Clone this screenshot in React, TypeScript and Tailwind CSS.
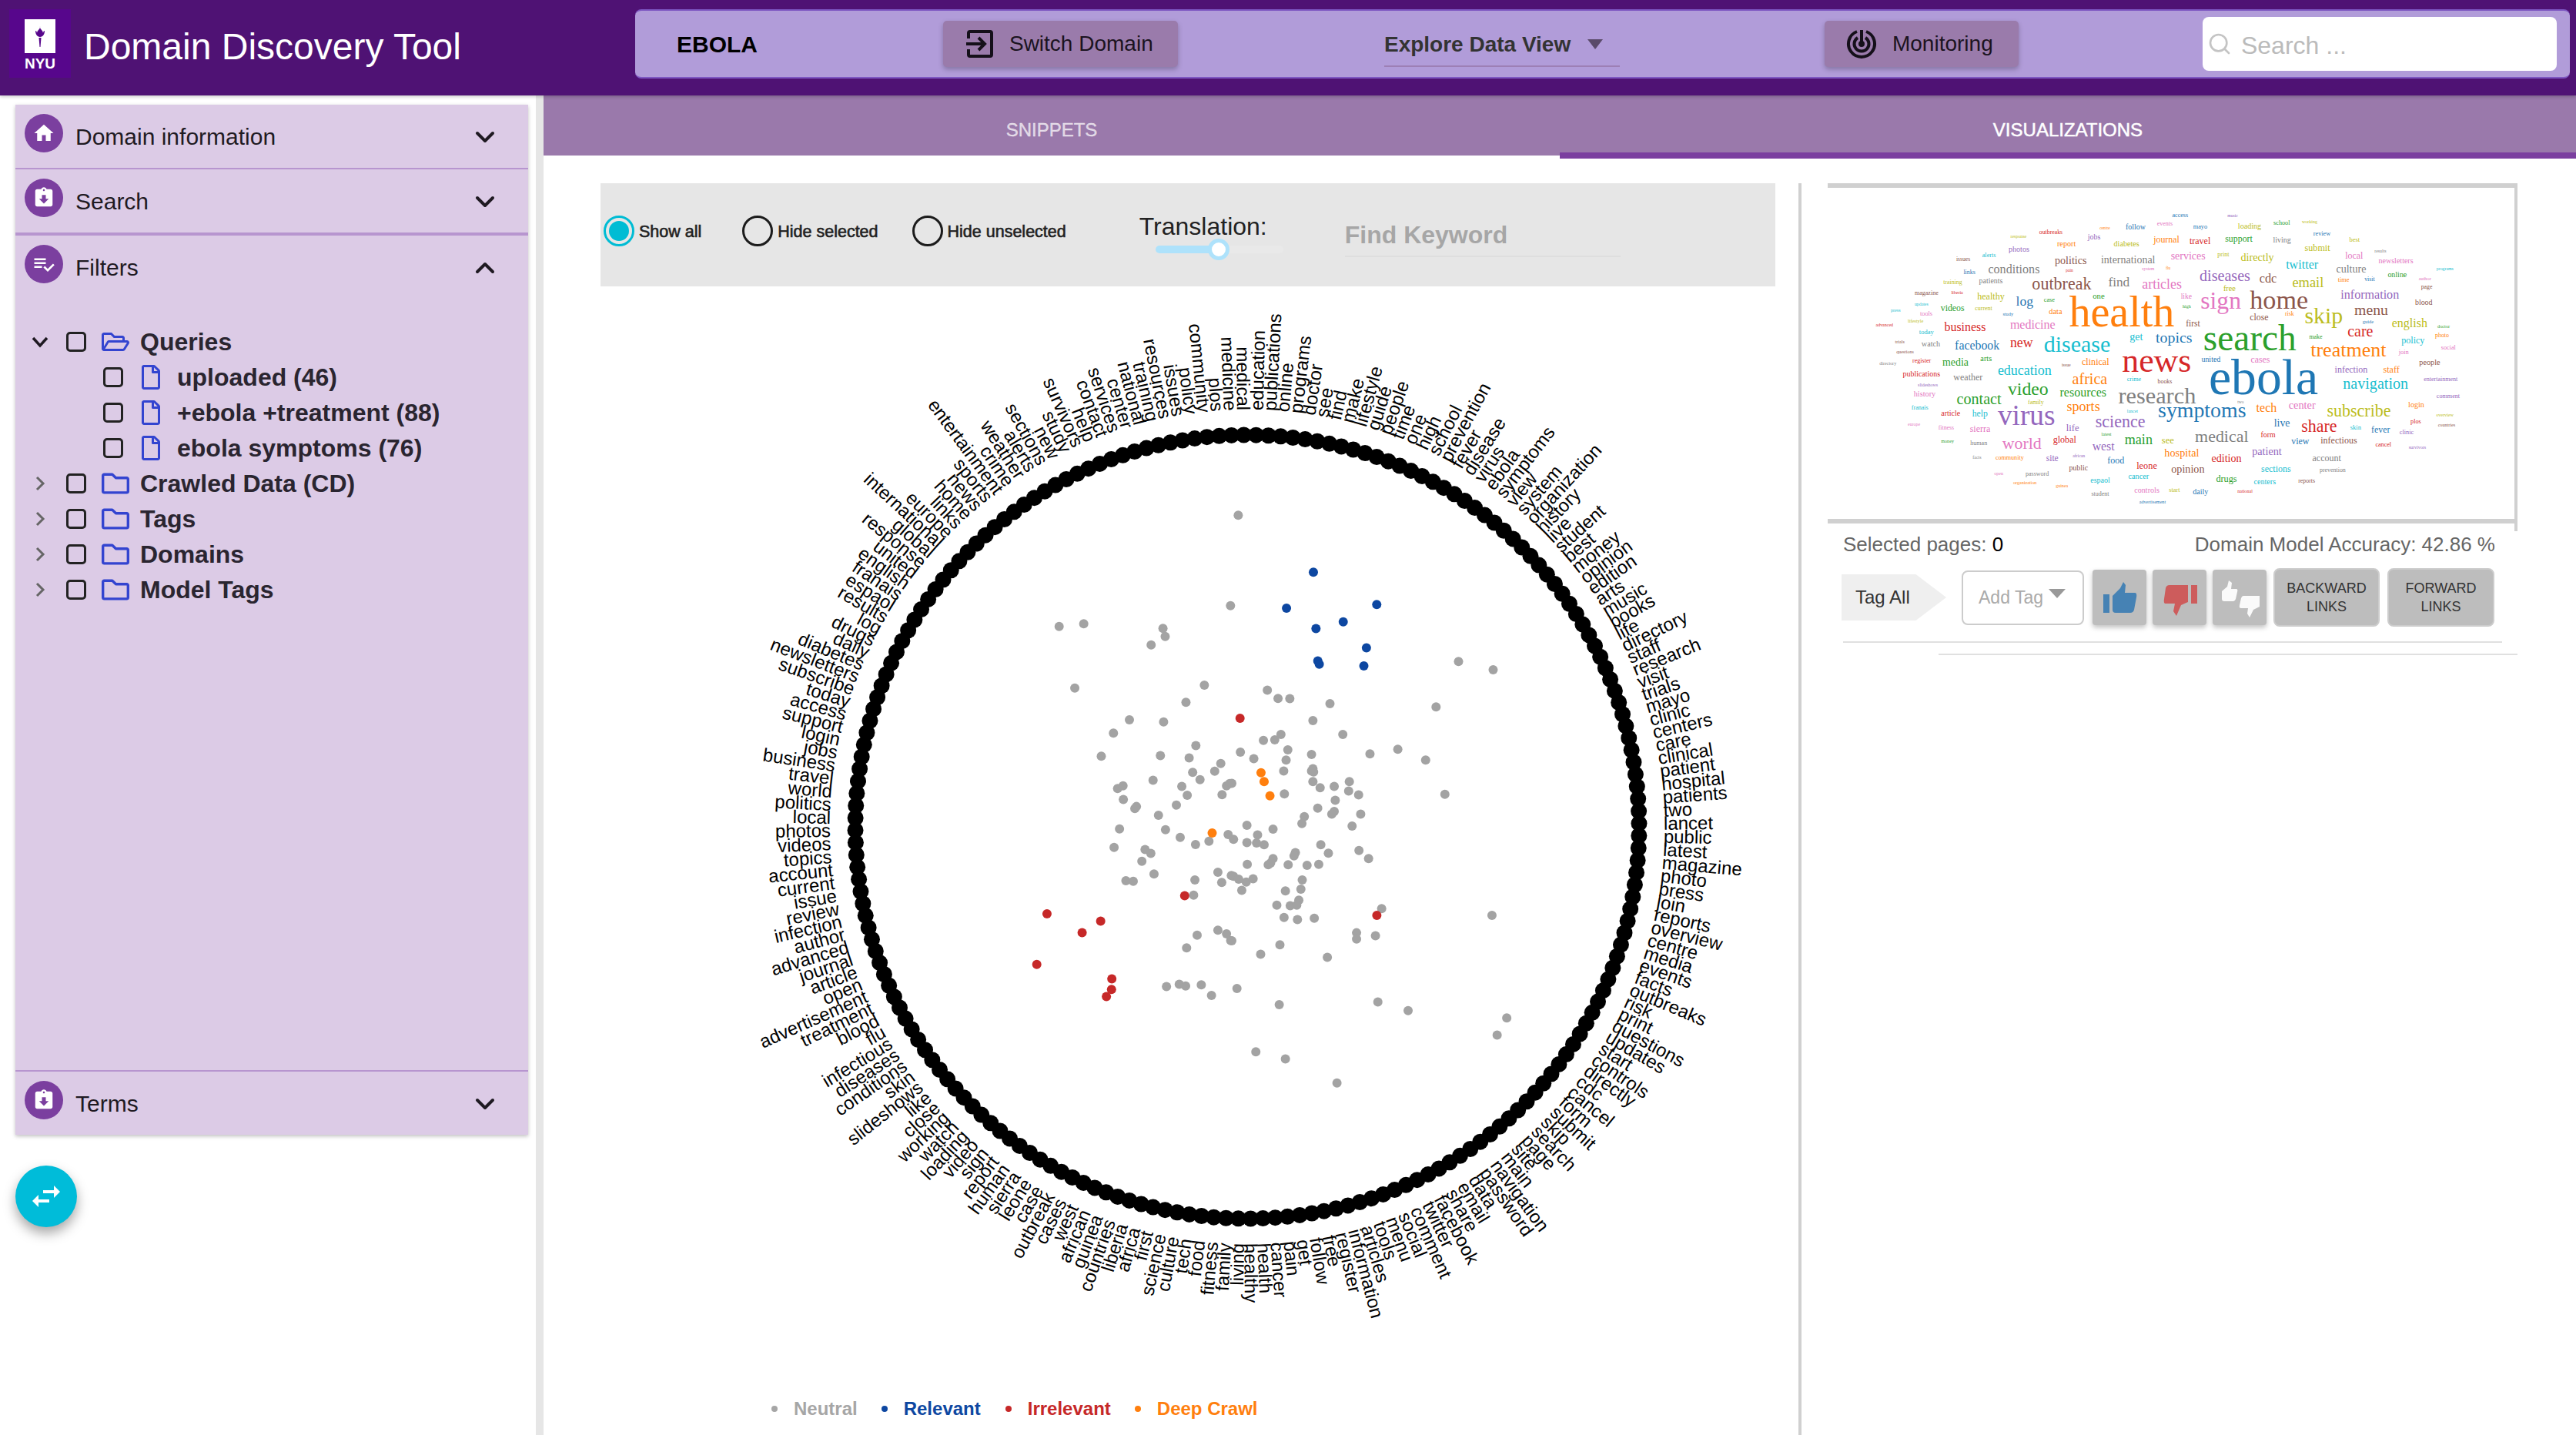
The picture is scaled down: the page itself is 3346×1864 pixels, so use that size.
import { ChevronDown, ChevronUp, Search } from "lucide-react";
import { FaRegFile, FaRegFolder, FaRegFolderOpen } from "react-icons/fa";

const HOME = "M10 20v-6h4v6h5v-8h3L12 3 2 12h3v8z";
const CLIPBOARD =
  "M19 3h-4.18C14.4 1.84 13.3 1 12 1c-1.3 0-2.4.84-2.82 2H5c-1.1 0-2 .9-2 2v14c0 1.1.9 2 2 2h14c1.1 0 2-.9 2-2V5c0-1.1-.9-2-2-2zm-7 0c.55 0 1 .45 1 1s-.45 1-1 1-1-.45-1-1 .45-1 1-1zm0 15l-5-5h3V9h4v4h3l-5 5z";
const PLAYLIST =
  "M14 10H2v2h12v-2zm0-4H2v2h12V6zM2 16h8v-2H2v2zm19.5-4.5L23 13l-6.99 7-4.51-4.5L13 14l3.01 3 5.49-5.5z";

const RADIAL_WORDS =
  "medicine medical education publications online programs doctor see find make lifestyle guide people time one high school prevention fever disease virus ebola symptoms view system organization history live student best money opinion edition arts music books life directory staff research visit trials mayo clinic centers care clinical patient hospital patients two lancet public latest magazine photo press join reports overview centre media events facts outbreaks risk print questions updates start controls directly cdc cancel form submit skip search page site main navigation password data email share facebook twitter comment social menu tools articles information register free follow get pain cancer health healthy living family fitness food tech culture science first africa liberia countries guinea african west cases outbreak case leone sierra human report sign video loading watch working close like slideshows skin conditions diseases infectious flu blood treatment advertisement open article journal advanced author infection review issue current account topics videos photos local politics world travel business jobs login support access today subscribe newsletters diabetes daily drugs log results espaol franais english united response global international europe links home news sports entertainment crime weather alerts sections new study survivors help contact services center national training resources issues policy community plos".split(
    " ",
  );

const CX = 1620;
const CY = 1074;
const STEP = 360 / RADIAL_WORDS.length;
const START = 179.5 - RADIAL_WORDS.indexOf("healthy") * STEP;

const fromZ = (list: number[][], ox: number, oy: number, sx: number, sy: number) =>
  list.map(([x, y]) => [ox + x / sx, oy + y / sy]);

const GRAY_DOTS = [
  ...fromZ([[1026, 1301], [1103, 1291], [1351, 1309], [1358, 1340], [1314, 1373]], 950, 380, 2.41, 3),
  ...fromZ(
    [[122, 810], [101, 1139], [720, 1342], [814, 1372], [30, 1428], [201, 1446], [230, 1476], [262, 1477], [371, 1495], [659, 1507]],
    1550, 380, 2.09, 2.8,
  ),
  ...fromZ(
    [
      [1075, 36], [1423, 84], [1246, 144], [1353, 151], [1196, 189], [1454, 231], [1158, 267], [1343, 265], [1433, 273],
      [1532, 292], [1513, 318], [1444, 322], [1467, 347], [1320, 349], [1209, 377], [1226, 368], [1410, 370], [1427, 400],
      [1536, 398], [1550, 368], [1560, 360], [1393, 433], [1227, 414], [1263, 445], [1268, 438], [1337, 468], [1215, 514],
      [1359, 517], [1405, 543], [1453, 567], [1495, 556], [1555, 533], [1198, 577], [1295, 584], [1313, 597], [1285, 624],
      [1323, 667], [1523, 661], [1565, 672], [1235, 690], [1258, 692], [1451, 687], [1535, 696], [1447, 739], [1523, 858],
      [1550, 870], [1563, 893], [1458, 875], [1425, 918], [1362, 1049], [1402, 1041], [1422, 1047], [1471, 1043], [1503, 1079],
    ],
    950, 880, 2.41, 2.613,
  ),
  ...fromZ(
    [
      [236, 42], [323, 89], [143, 89], [125, 107], [92, 109], [163, 141], [25, 149], [232, 157], [402, 155], [483, 139],
      [64, 171], [158, 176], [564, 176], [151, 213], [232, 213], [236, 205], [238, 216], [0, 255], [236, 249], [342, 249],
      [257, 270], [298, 265], [340, 281], [369, 294], [153, 291], [620, 292], [301, 312], [250, 339], [298, 350], [291, 359],
      [375, 359], [211, 368], [204, 391], [44, 397], [350, 400], [120, 410], [75, 430], [5, 445], [44, 456], [72, 457],
      [94, 463], [259, 463], [370, 483], [281, 492], [185, 490], [181, 501], [398, 510], [120, 510], [113, 525], [106, 531],
      [45, 530], [164, 531], [219, 533], [253, 530], [5, 570], [20, 580], [42, 590], [62, 579], [205, 583], [201, 614],
      [29, 618], [156, 620], [195, 651], [131, 668], [170, 670], [189, 668], [152, 710], [191, 717], [240, 713], [436, 680],
      [757, 703], [363, 762], [363, 783], [418, 772], [140, 803], [84, 835], [278, 845], [0, 789], [15, 951], [138, 1006],
      [425, 997], [513, 1026], [800, 1051], [772, 1109], [70, 1166], [156, 1190], [306, 1272],
    ],
    1600, 920, 2.24, 2.613,
  ),
];

const BLUE_DOTS = fromZ(
  [[326, 1017], [253, 1148], [498, 1135], [407, 1198], [333, 1222], [470, 1292], [338, 1340], [342, 1352], [463, 1358]],
  1550, 380, 2.09, 2.8,
);

const RED_DOTS = [
  ...fromZ([[1419, 741], [988, 802], [1156, 827], [1098, 866], [956, 974], [1191, 1023], [1190, 1059], [1174, 1083]], 950, 880, 2.41, 2.613),
  ...fromZ([[24, 34], [422, 703]], 1600, 920, 2.24, 2.613),
];

const ORANGE_DOTS = [
  ...fromZ([[1505, 528]], 950, 880, 2.41, 2.613),
  ...fromZ([[85, 219], [94, 249], [111, 297]], 1600, 920, 2.24, 2.613),
];

const CLOUD_COLORS: Record<string, string> = {
  b: "#1f77b4",
  o: "#ff7f0e",
  g: "#2ca02c",
  r: "#d62728",
  p: "#9467bd",
  n: "#8c564b",
  k: "#e377c2",
  y: "#7f7f7f",
  l: "#bcbd22",
  c: "#17becf",
};

const CLOUD = `access 778 813 149 b|music 899 922 151 p|follow 676 720 194 b|events 745 779 185 k|centre 619 642 199 o|mayo 824 855 197 b|loading 922 973 195 l|school 1000 1036 178 g|working 1062 1096 175 l|outbreaks 487 538 214 r|response 424 459 235 l|jobs 593 621 237 p|review 1087 1125 221 b|best 1166 1189 244 l|diabetes 650 706 261 l|journal 737 794 248 o|travel 816 862 248 r|support 894 954 248 g|living 999 1038 249 y|report 526 567 267 o|submit 1068 1124 277 l|photos 420 465 285 p|alerts 362 392 304 c|issues 305 336 322 n|services 775 851 312 k|print 877 903 306 l|directly 928 1001 317 l|local 1157 1196 307 k|results 1221 1247 288 y|newsletters 1230 1306 327 k|politics 521 591 329 n|international 622 741 323 y|twitter 1027 1098 345 c|conditions 375 488 358 y|links 321 347 370 b|pain 545 561 367 r|system 712 739 361 k|flu 764 774 354 o|culture 1137 1203 359 y|programs 1357 1394 361 c|online 1250 1292 381 g|diseases 838 949 384 p|cdc 969 1007 393 n|time 1141 1166 401 o|visit 1199 1222 401 b|author 1318 1345 397 k|training 277 318 413 l|patients 355 407 411 y|outbreak 471 601 414 n|find 638 685 409 y|articles 712 799 417 k|email 1041 1110 410 l|page 1323 1348 432 n|free 890 917 434 l|magazine 214 266 455 n|liberia 294 320 451 r|information 1147 1275 459 p|like 797 821 464 k|healthy 351 411 469 l|log 436 474 490 b|one 604 630 466 g|case 497 521 479 g|home 948 1076 477 n|blood 1310 1348 488 n|health 552 783 525 o|sign 840 929 503 k|updates 214 244 498 c|videos 271 323 511 g|current 346 384 515 l|high 801 819 505 g|menu 1177 1251 523 n|press 162 183 523 c|tools 226 253 532 k|study 407 430 535 b|data 508 537 524 o|skip 1068 1152 550 l|close 948 989 547 n|risk 1025 1045 533 o|lifestyle 199 233 564 l|guide 1195 1219 565 b|medicine 423 522 574 k|first 808 839 571 n|english 1259 1337 574 l|advanced 129 167 577 r|business 279 370 585 r|doctor 1359 1386 582 g|today 224 256 605 c|search 846 1050 625 g|care 1162 1218 607 r|photo 1354 1384 617 o|make 1078 1107 623 g|get 685 714 630 c|topics 742 822 637 b|trials 171 192 642 n|watch 229 270 651 y|facebook 302 400 657 b|new 423 473 652 r|disease 497 643 650 c|policy 1280 1331 638 c|social 1367 1399 664 k|treatment 1081 1247 680 o|questions 174 212 685 n|join 1274 1296 688 k|news 668 820 730 r|directory 137 174 727 y|register 209 250 719 r|media 275 332 720 g|arts 358 383 711 g|clinical 580 640 721 o|issue 536 556 733 n|united 842 884 711 b|cases 950 992 716 k|people 1319 1365 724 n|ebola 858 1098 780 b|education 396 514 753 c|infection 1134 1206 751 p|staff 1240 1276 751 o|publications 188 270 771 r|weather 299 363 781 y|africa 559 636 786 o|crime 679 710 791 c|books 746 778 796 n|entertainment 1329 1403 791 p|slideshows 221 265 811 p|video 418 507 825 g|navigation 1152 1295 817 c|resources 532 634 845 g|research 660 830 850 y|history 212 260 849 k|comment 1357 1408 857 p|contact 306 404 871 g|family 462 497 880 l|two 921 935 877 y|login 1295 1330 891 o|franais 207 244 898 c|article 272 314 921 r|help 340 374 925 c|sports 547 620 905 o|lancet 679 703 912 c|symptoms 747 940 925 b|tech 962 1007 898 o|center 1033 1092 894 k|subscribe 1117 1257 910 l|overview 1356 1394 930 l|plos 1300 1323 953 r|europe 199 226 967 k|virus 396 522 940 p|life 546 574 978 p|science 610 719 960 p|live 1001 1036 958 b|share 1061 1139 972 r|skin 1168 1192 976 c|countries 1360 1398 967 n|fever 1214 1255 985 b|fitness 266 300 976 k|sierra 335 380 985 k|latest 623 645 1002 g|clinic 1276 1307 994 p|money 272 300 1033 g|human 336 373 1037 y|world 406 492 1036 k|global 517 568 1027 r|main 674 735 1030 g|see 755 782 1028 l|medical 828 945 1011 y|form 972 1004 1005 r|view 1039 1078 1033 b|infectious 1103 1183 1027 n|cancel 1223 1258 1042 r|survivors 1296 1334 1056 p|west 603 652 1054 p|hospital 761 837 1079 o|patient 953 1018 1079 p|edition 864 930 1097 r|facts 341 360 1092 y|community 391 453 1097 o|site 502 529 1099 p|african 560 587 1087 p|food 636 673 1105 b|account 1085 1148 1100 y|leone 700 745 1124 r|public 552 594 1137 n|opinion 776 849 1146 n|sections 973 1038 1141 c|prevention 1101 1158 1145 y|open 388 408 1159 k|password 457 508 1157 y|cancer 682 727 1168 c|drugs 874 920 1178 g|espaol 599 642 1185 c|centers 957 1005 1191 c|reports 1054 1091 1188 n|organization 430 481 1195 o|guinea 523 550 1207 o|controls 695 750 1221 k|start 771 795 1222 l|daily 823 857 1228 b|national 921 954 1224 r|student 601 640 1234 y|advertisement 706 764 1266 b`
  .split("|")
  .map((row) => row.split(" "));

function timesWidth(word: string) {
  let em = 0;
  for (const ch of word) {
    if ("iljt".includes(ch)) em += 0.28;
    else if ("fr".includes(ch)) em += 0.33;
    else if (ch === "s") em += 0.39;
    else if ("eacz".includes(ch)) em += 0.44;
    else if (ch === "m") em += 0.78;
    else if (ch === "w") em += 0.72;
    else em += 0.5;
  }
  return em;
}

// how far the baseline sits under the visual middle of a word, in em
function baselineDrop(word: string) {
  const top = /[bdfhkl]/.test(word) ? 0.68 : 0.45;
  const bottom = /[gjpqy]/.test(word) ? -0.21 : 0;
  return (top + bottom) / 2;
}

function WordCloud() {
  return (
    <svg width="892" height="430" className="block [font-family:'Liberation_Serif',serif]">
      {CLOUD.map(([word, x1, x2, yc, color]) => {
        const left = Number(x1) / 1.686 - 14;
        const width = (Number(x2) - Number(x1)) / 1.686;
        const size = width / timesWidth(word);
        const y = 230 + Number(yc) / 3 - 244 + size * baselineDrop(word);
        return (
          <text
            key={word + x1}
            x={left}
            y={y}
            fontSize={size}
            fill={CLOUD_COLORS[color]}
            textLength={width}
            lengthAdjust="spacingAndGlyphs"
          >
            {word}
          </text>
        );
      })}
    </svg>
  );
}

function RadialChart() {
  return (
    <svg
      width="1630"
      height="1428"
      viewBox="706 372 1630 1428"
      className="block [font-family:'Liberation_Sans',sans-serif]"
    >
      {RADIAL_WORDS.map((word, i) => {
        const a = START + i * STEP;
        const rad = ((a - 90) * Math.PI) / 180;
        const norm = ((a % 360) + 360) % 360;
        const flip = norm > 180;
        return (
          <g key={word + i}>
            <circle cx={CX + 509 * Math.cos(rad)} cy={CY + 509 * Math.sin(rad)} r="10.5" fill="#000" />
            <text
              transform={`translate(${CX} ${CY}) rotate(${a - 90}) translate(541 0)${flip ? " rotate(180)" : ""}`}
              fontSize="24"
              dy=".35em"
              textAnchor={flip ? "end" : "start"}
              fill="#000"
            >
              {word}
            </text>
          </g>
        );
      })}
      {GRAY_DOTS.map(([x, y], i) => (
        <circle key={i} cx={x} cy={y} r="6" fill="#a3a3a3" />
      ))}
      {BLUE_DOTS.map(([x, y], i) => (
        <circle key={i} cx={x} cy={y} r="6" fill="#0d47a1" />
      ))}
      {RED_DOTS.map(([x, y], i) => (
        <circle key={i} cx={x} cy={y} r="6" fill="#c62828" />
      ))}
      {ORANGE_DOTS.map(([x, y], i) => (
        <circle key={i} cx={x} cy={y} r="6" fill="#ff7f0e" />
      ))}
    </svg>
  );
}

function PanelIcon({ d }: { d: string }) {
  return (
    <span className="mt-3 flex h-[50px] w-[50px] shrink-0 items-center justify-center rounded-full bg-[#7b3f9f]">
      <svg viewBox="0 0 24 24" className="h-[30px] w-[30px] fill-white">
        <path d={d} />
      </svg>
    </span>
  );
}

function PanelRow({ icon, label, open }: { icon: string; label: string; open?: boolean }) {
  return (
    <div className="flex h-[82px] items-start pl-3 pr-[36px] text-[30px] text-[#1f1a22]">
      <PanelIcon d={icon} />
      <span className="ml-[16px] mt-[23px] leading-[38px]">{label}</span>
      <span className="ml-auto mt-[22px]">
        {open ? <ChevronUp size={40} strokeWidth={2.4} /> : <ChevronDown size={40} strokeWidth={2.4} />}
      </span>
    </div>
  );
}

function CheckBox() {
  return <span className="h-[26px] w-[26px] shrink-0 rounded-[5px] border-[3px] border-[#222]" />;
}

function TreeRow({ label, open, child }: { label: string; open?: boolean; child?: boolean }) {
  if (child) {
    return (
      <div className="flex h-[46px] items-center pl-[114px] text-[32px] font-bold text-[#2a2530]">
        <CheckBox />
        <FaRegFile className="ml-[20px] shrink-0 text-[#3344d0]" size={32} />
        <span className="ml-[18px] whitespace-nowrap">{label}</span>
      </div>
    );
  }
  return (
    <div className="flex h-[46px] items-center pl-[20px] text-[32px] font-bold text-[#2a2530]">
      <span className="flex w-[46px] shrink-0 justify-center pr-[22px]">
        {open ? (
          <svg width="24" height="16" viewBox="0 0 24 16">
            <path d="M3 3l9 10 9-10" fill="none" stroke="#1f1a22" strokeWidth="3.5" />
          </svg>
        ) : (
          <svg width="16" height="24" viewBox="0 0 16 24">
            <path d="M4 4l8 8-8 8" fill="none" stroke="#666" strokeWidth="3" />
          </svg>
        )}
      </span>
      <CheckBox />
      {open ? (
        <FaRegFolderOpen className="ml-[20px] shrink-0 text-[#3344d0]" size={36} />
      ) : (
        <FaRegFolder className="ml-[20px] shrink-0 text-[#3344d0]" size={36} />
      )}
      <span className="ml-[14px] whitespace-nowrap">{label}</span>
    </div>
  );
}

function Radio({ label, checked, gap }: { label: string; checked?: boolean; gap: string }) {
  return (
    <div className={`flex items-center ${gap}`}>
      <span
        className={`flex h-10 w-10 items-center justify-center rounded-full border-[3px] ${
          checked ? "border-[#00bcd4]" : "border-[#1c1c1c]"
        }`}
      >
        {checked && <span className="h-[26px] w-[26px] rounded-full bg-[#00bcd4]" />}
      </span>
      <span className="ml-[6px] mt-[3px] whitespace-nowrap text-[21.500px] text-[#222] [-webkit-text-stroke:0.6px_#222]">
        {label}
      </span>
    </div>
  );
}

function ToolButton({ children, label, width }: { children: React.ReactNode; label: string; width: string }) {
  return (
    <button className={`flex h-[60px] items-center rounded-[5px] bg-[#9a7bab] text-[28px] text-[#1b1320] shadow-[0_3px_6px_rgba(0,0,0,0.25)] ${width}`}>
      {children}
      <span className="whitespace-nowrap">{label}</span>
    </button>
  );
}

function ThumbButton({ children }: { children: React.ReactNode }) {
  return (
    <button className="h-[72px] w-[70px] rounded-[4px] bg-[#bdbdbd] shadow-[0_3px_6px_rgba(0,0,0,0.25)]">
      <svg viewBox="0 0 70 72" className="h-full w-full">
        {children}
      </svg>
    </button>
  );
}

function LinksButton({ top, width }: { top: string; width: string }) {
  return (
    <button className={`flex h-[76px] flex-col items-center justify-center rounded-[8px] border-2 border-[#cccccc] bg-[#bdbdbd] text-[18px] leading-[24px] text-[#333] ${width}`}>
      <span>{top}</span>
      <span>LINKS</span>
    </button>
  );
}

function LegendItem({ label, dot, text, gap }: { label: string; dot: string; text: string; gap: string }) {
  return (
    <div className={`flex items-center ${gap}`}>
      <span className={`h-2 w-2 rounded-full ${dot}`} />
      <span className={`ml-[21px] text-[24px] font-bold ${text}`}>{label}</span>
    </div>
  );
}

export default function App() {
  return (
    <div className="h-[1864px] w-[3346px] overflow-hidden bg-white [font-family:'Liberation_Sans',Arial,sans-serif]">
      {/* HEADER */}
      <header className="relative z-10 flex h-[124px] items-start bg-[#4f1274] shadow-[0_2px_4px_rgba(0,0,0,0.2)]">
        <div className="ml-3 mt-3 flex h-[89px] w-[80px] flex-col items-center bg-[#57068c] pt-[13px]">
          <div className="flex h-[44px] w-[40px] items-center justify-center bg-white">
            <svg viewBox="0 0 24 28" className="h-[38px] w-[24px]">
              <path d="M12 1c1 4-4 5-4 9 0-2-1-3-2-3 0 4 2 8 6 8s6-4 6-8c-1 0-2 1-2 3 0-4-5-5-4-9z" fill="#57068c" />
              <path d="M10.500 16h3l-1 12h-1z" fill="#57068c" />
            </svg>
          </div>
          <span className="mt-[2px] text-[19px] font-bold leading-[24px] text-white">NYU</span>
        </div>
        <h1 className="ml-[17px] mt-[36px] whitespace-nowrap text-[48px] leading-[50px] text-white">
          Domain Discovery Tool
        </h1>
        <div className="ml-[226px] mt-3 flex h-[90px] w-[2513px] items-center rounded-[8px] border-y-2 border-[#7e57c2] bg-[#b19cd9] pr-[17px]">
          <span className="ml-[54px] w-[346px] text-[30px] font-bold text-black">EBOLA</span>
          <ToolButton label="Switch Domain" width="w-[305px]">
            <svg viewBox="0 0 36 36" className="ml-[30px] mr-[20px] h-9 w-9" fill="none" stroke="#15101a" strokeWidth="4">
              <path d="M3 11V4a2 2 0 012-2h26a2 2 0 012 2v28a2 2 0 01-2 2H5a2 2 0 01-2-2v-7" />
              <path d="M0 18h24M16 10l8 8-8 8" />
            </svg>
          </ToolButton>
          <div className="ml-[268px] flex h-[60px] w-[306px] items-center border-b-2 border-[#9d7fb5] pt-[3px]">
            <span className="whitespace-nowrap text-[28px] font-bold text-[#333]">Explore Data View</span>
            <span className="ml-[22px] h-0 w-0 border-x-[10px] border-t-[13px] border-x-transparent border-t-[#5a4a6a]" />
          </div>
          <div className="ml-[266px]">
            <ToolButton label="Monitoring" width="w-[252px]">
              <svg viewBox="0 0 40 40" className="ml-[28px] mr-[20px] h-10 w-10" fill="none" stroke="#15101a" strokeWidth="4">
                <path d="M14 4a17 17 0 1012 0" />
                <path d="M15 12a9.500 9.500 0 1010 0" />
                <path d="M20 2v18" />
                <circle cx="20" cy="20" r="2" fill="#15101a" />
              </svg>
            </ToolButton>
          </div>
          <div className="ml-auto flex h-[70px] w-[460px] items-center rounded-[8px] bg-white pl-[6px]">
            <Search size={32} className="text-[#c4c4c4]" />
            <span className="ml-[12px] mt-[3px] text-[32px] text-[#bbbbbb]">Search ...</span>
          </div>
        </div>
      </header>

      <div className="flex h-[1740px]">
        {/* SIDEBAR */}
        <aside className="relative w-[706px] shrink-0 border-r-[10px] border-[#e6e6e6] pl-5 pt-3">
          <div className="flex h-[1338px] w-[666px] flex-col bg-[#dccbe6] shadow-[0_2px_5px_rgba(0,0,0,0.25)]">
            <PanelRow icon={HOME} label="Domain information" />
            <div className="h-[2px] bg-[#b795cf]" />
            <PanelRow icon={CLIPBOARD} label="Search" />
            <div className="h-[4px] bg-[#b795cf]" />
            <PanelRow icon={PLAYLIST} label="Filters" open />
            <div className="pt-[33px]">
              <TreeRow label="Queries" open />
              <TreeRow label="uploaded (46)" child />
              <TreeRow label="+ebola +treatment (88)" child />
              <TreeRow label="ebola symptoms (76)" child />
              <TreeRow label="Crawled Data (CD)" />
              <TreeRow label="Tags" />
              <TreeRow label="Domains" />
              <TreeRow label="Model Tags" />
            </div>
            <div className="mt-auto h-[2px] bg-[#b795cf]" />
            <PanelRow icon={CLIPBOARD} label="Terms" />
          </div>
          <button className="mt-10 flex h-20 w-20 items-center justify-center rounded-full bg-[#00bcd9] shadow-[0_8px_16px_rgba(0,0,0,0.35)]">
            <svg viewBox="0 0 24 24" className="h-12 w-12 fill-white">
              <path d="M6.990 11L3 15l3.990 4v-3H14v-2H6.990v-3zM21 9l-3.990-4v3H10v2h7.010v3L21 9z" />
            </svg>
          </button>
        </aside>

        <main className="min-w-0 flex-1">
          {/* TABS */}
          <div className="flex h-[78px] bg-[#9a79ab] text-[24px]">
            <div className="flex w-1/2 items-center justify-center pt-[11px] text-white/70 [-webkit-text-stroke:0.4px_rgba(255,255,255,0.7)]">
              SNIPPETS
            </div>
            <div className="relative flex w-1/2 items-center justify-center pt-[11px] text-white [-webkit-text-stroke:0.5px_#fff]">
              VISUALIZATIONS
              <span className="absolute -bottom-1 left-0 h-2 w-full bg-[#7b3f9f]" />
            </div>
          </div>

          <div className="flex h-[1662px]">
            {/* CHART COLUMN */}
            <section className="w-[1630px] shrink-0 pt-9">
              <div className="ml-[74px] flex h-[134px] w-[1526px] items-start bg-[#e6e6e6] pl-1 pt-[42px]">
                <Radio label="Show all" checked gap="" />
                <Radio label="Hide selected" gap="ml-[53px]" />
                <Radio label="Hide unselected" gap="ml-[44px]" />
                <div className="ml-[95px] w-[187px]">
                  <div className="-mt-[4px] whitespace-nowrap text-[32px] leading-[36px] text-[#222]">Translation:</div>
                  <div className="relative ml-[21px] mt-[7px] h-[10px] w-[166px] rounded-full bg-[#e9e9e9]">
                    <div className="h-[10px] w-[76px] rounded-l-full bg-[#aee2fb]" />
                    <span className="absolute -top-[9px] left-[68px] h-7 w-7 rounded-full border-[5px] border-[#aee2fb] bg-white" />
                  </div>
                </div>
                <div className="ml-[80px] h-[54px] w-[358px] border-b-2 border-[#dedede] pt-[5px] text-[32px] font-bold leading-[40px] text-[#a6a6a6]">
                  Find Keyword
                </div>
              </div>
              <RadialChart />
              <div className="flex h-[60px] items-center pl-[296px]">
                <LegendItem label="Neutral" dot="bg-[#a6a6a6]" text="text-[#a6a6a6]" gap="" />
                <LegendItem label="Relevant" dot="bg-[#0d47a1]" text="text-[#0d47a1]" gap="ml-[31px]" />
                <LegendItem label="Irrelevant" dot="bg-[#c62828]" text="text-[#c62828]" gap="ml-[32px]" />
                <LegendItem label="Deep Crawl" dot="bg-[#ff7f0e]" text="text-[#ff7f0e]" gap="ml-[31px]" />
              </div>
            </section>

            <div className="mt-9 w-1 shrink-0 bg-[#d0d0d0]" />

            {/* RIGHT COLUMN */}
            <section className="ml-[34px] w-[896px] pt-9">
              <div className="relative h-[442px] border-y-[6px] border-r-4 border-[#d0d0d0]">
                <WordCloud />
                <span className="absolute -bottom-4 -right-1 h-[10px] w-1 bg-[#d0d0d0]" />
              </div>
              <div className="mt-[10px] flex items-center justify-between pl-5 pr-[29px] text-[26px] leading-[34px] text-[#666]">
                <span>
                  Selected pages: <span className="text-black">0</span>
                </span>
                <span>Domain Model Accuracy: 42.86 %</span>
              </div>
              <div className="ml-[18px] mt-[14px] flex h-[76px] items-center">
                <div className="flex h-[60px] w-[136px] items-center bg-[#efefef] pl-[18px] text-[24px] text-[#333] [clip-path:polygon(0_0,71%_0,100%_50%,71%_100%,0_100%)]">
                  Tag All
                </div>
                <div className="ml-5 flex h-[71px] w-[159px] items-center rounded-[8px] border-2 border-[#cccccc] pl-5 text-[23px] text-[#aaaaaa]">
                  Add Tag
                  <span className="-mt-[10px] ml-[7px] h-0 w-0 border-x-[11px] border-t-[12px] border-x-transparent border-t-[#999]" />
                </div>
                <div className="ml-[11px] flex gap-2">
                  <ThumbButton>
                    <path d="M14 32h8v24h-8z" fill="#4682b4" />
                    <path d="M26 34l10-10 4-8 3 4-1 10h13q3 0 2 6l-3 16q-1 4-5 4H30q-4 0-4-4z" fill="#4682b4" />
                  </ThumbButton>
                  <ThumbButton>
                    <path d="M50 20h8v24h-8z" fill="#cd5c5c" />
                    <path d="M46 42l-9 4-6 14-4-6 2-10H17q-3 0-2-6l2-14q1-4 5-4h24z" fill="#cd5c5c" />
                  </ThumbButton>
                  <ThumbButton>
                    <path d="M12 28l7-6 2-8 4 3-1 8h7q2 0 1 4l-2 9q-1 3-3 3H15q-3 0-3-3z" fill="#fafafa" />
                    <path d="M61 48l-8 4-5 10-3-5 1-7H37q-3 0-2-4l2-9q1-3 3-3h21z" fill="#fafafa" />
                  </ThumbButton>
                </div>
                <div className="ml-[9px] flex gap-[10px]">
                  <LinksButton top="BACKWARD" width="w-[138px]" />
                  <LinksButton top="FORWARD" width="w-[139px]" />
                </div>
              </div>
              <div className="ml-5 mt-[19px] h-[2px] w-[856px] bg-[#e0e0e0]" />
              <div className="ml-[144px] mt-[14px] h-[2px] w-[752px] bg-[#e0e0e0]" />
            </section>
          </div>
        </main>
      </div>
    </div>
  );
}
